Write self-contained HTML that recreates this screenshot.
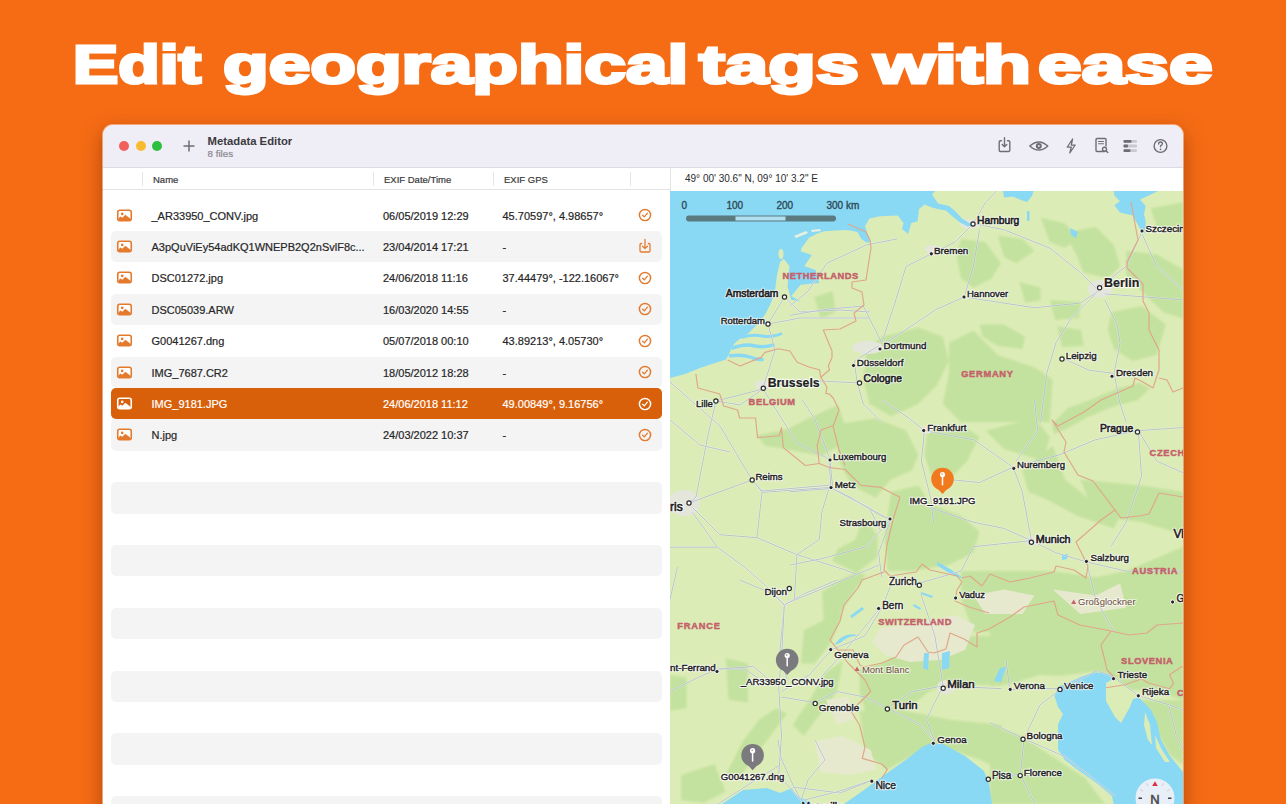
<!DOCTYPE html>
<html><head><meta charset="utf-8">
<style>
*{margin:0;padding:0;box-sizing:border-box}
html,body{width:1286px;height:804px;overflow:hidden;background:#F66C15;font-family:"Liberation Sans",sans-serif}
#headline{position:absolute;left:0;top:0;width:1286px;height:110px}
#headline span{position:absolute;top:34px;font-weight:bold;font-size:53px;color:#fff;white-space:nowrap;transform-origin:0 0;-webkit-text-stroke:3px #fff}
#win{position:absolute;left:103px;top:125px;width:1080px;height:700px;border-radius:10px;background:#fff;overflow:hidden;box-shadow:0 0 0 1px rgba(255,225,200,0.55),0 7px 20px rgba(110,35,0,0.55)}
#title{position:absolute;left:0;top:0;width:1080px;height:43px;background:#EFEDF5;border-bottom:1px solid #DDDBE2}
.tl{position:absolute;top:16px;width:10.2px;height:10.2px;border-radius:50%}
#hdr{position:absolute;left:0;top:43px;width:567px;height:22px;background:#fff;border-bottom:1px solid #E3E3E3}
.hd{position:absolute;top:0.5px;height:22px;line-height:22px;font-size:9.5px;color:#3a3a3a;-webkit-text-stroke:0.2px #3a3a3a}
.vd{position:absolute;top:4px;width:1px;height:14px;background:#E6E6E6}
.row{position:absolute;left:8px;width:551px;height:31.4px;border-radius:5px}
.row.s{background:#F4F4F5}
.row.sel{background:#D9600B}
.cell{position:absolute;top:1px;height:31px;line-height:31px;font-size:11px;color:#262626;white-space:nowrap;-webkit-text-stroke:0.2px #262626}
.sel .cell{-webkit-text-stroke:0.2px #fff}
.sel .cell{color:#fff}
#map{position:absolute;left:567px;top:66px;width:513px;height:640px;background:#DCEBB8;overflow:hidden}
#coord{position:absolute;left:567px;top:43px;width:513px;height:23px;background:#fff;border-left:1px solid #E3E3E3;font-size:10px;line-height:22px;color:#2a2a2a;padding-left:14px;white-space:nowrap}
#ttl{position:absolute;left:104.5px;top:9.5px;font-size:11.3px;font-weight:bold;color:#3b3a40;white-space:nowrap}
#sub{position:absolute;left:104.5px;top:22.5px;font-size:9.8px;color:#8a898f;white-space:nowrap;-webkit-text-stroke:0.2px #8a898f}
</style></head><body>
<div id="headline"><span style="left:73px;transform:scaleX(1.2795)">Edit</span><span style="left:223px;transform:scaleX(1.4104)">geographical</span><span style="left:699px;transform:scaleX(1.4672)">tags</span><span style="left:874px;transform:scaleX(1.4816)">with</span><span style="left:1038px;transform:scaleX(1.4808)">ease</span></div>
<div id="win">
  <div id="title">
    <div class="tl" style="left:16px;background:#F1605A"></div>
    <div class="tl" style="left:32.5px;background:#F7BB31"></div>
    <div class="tl" style="left:49px;background:#2DC040"></div>
    <svg width="14" height="14" viewBox="0 0 14 14" style="position:absolute;left:79px;top:14px"><path d="M7 1.5 V12.5 M1.5 7 H12.5" stroke="#6E6D74" stroke-width="1.5"/></svg>
    <div id="ttl">Metadata Editor</div>
    <div id="sub">8 files</div>
    <svg width="200" height="30" viewBox="0 0 200 30" style="position:absolute;left:880px;top:6px">
<g fill="none" stroke="#6E6D74" stroke-width="1.4" stroke-linecap="round" stroke-linejoin="round">
<path d="M18.5 9.8 H17.5 Q16.2 9.8 16.2 11.1 V19.2 Q16.2 20.5 17.5 20.5 H25.5 Q26.8 20.5 26.8 19.2 V11.1 Q26.8 9.8 25.5 9.8 H24.5"/>
<path d="M21.5 6.8 V15.8 M19.2 13.5 L21.5 15.8 L23.8 13.5"/>
<path d="M46.8 15 Q55.8 6.8 64.8 15 Q55.8 23.2 46.8 15 Z"/>
<path d="M89.6 8 L84.3 16 H88.3 L86.8 22 L92.2 14 H88.3 Z" stroke-width="1.25"/>
<path d="M121.5 20.5 H114 Q113 20.5 113 19.5 V8.5 Q113 7.5 114 7.5 H122 Q123 7.5 123 8.5 V15"/>
<path d="M115.5 10.5 H120.5 M115.5 12.8 H120.5" stroke-width="1.1"/>
<circle cx="121.5" cy="18.3" r="2"/><path d="M123 19.8 L124.8 21.6"/>
<circle cx="177.5" cy="15" r="6.4"/>
<path d="M175.6 13.1 Q175.6 11 177.5 11 Q179.4 11 179.4 12.8 Q179.4 14 177.5 14.8 V15.8" stroke-width="1.3"/>
</g>
<circle cx="55.8" cy="15" r="3" fill="#6E6D74"/>
<circle cx="55.8" cy="15" r="0.9" fill="#EEECF3"/>
<circle cx="177.5" cy="18.3" r="0.85" fill="#6E6D74"/>
<g fill="#C9C8CE">
<rect x="140.5" y="9" width="13.5" height="2.8" rx="1.2"/>
<rect x="140.5" y="13.6" width="13.5" height="2.8" rx="1.2"/>
<rect x="140.5" y="18.2" width="13.5" height="2.8" rx="1.2"/>
</g>
<g fill="#6E6D74">
<rect x="140.5" y="9" width="8" height="2.8" rx="1"/>
<rect x="140.5" y="13.6" width="4.5" height="2.8" rx="1"/>
<rect x="140.5" y="18.2" width="7" height="2.8" rx="1"/>
</g>
</svg>
  </div>
  <div id="hdr">
    <div class="vd" style="left:39px"></div>
    <div class="hd" style="left:50px">Name</div>
    <div class="vd" style="left:270px"></div>
    <div class="hd" style="left:281px">EXIF Date/Time</div>
    <div class="vd" style="left:390px"></div>
    <div class="hd" style="left:401px">EXIF GPS</div>
    <div class="vd" style="left:527px"></div>
  </div>
  <div id="rows">
<div class="row" style="top:74.6px"><svg width="17" height="14" viewBox="0 0 17 14" style="position:absolute;left:5px;top:9px">
<rect x="1.75" y="1.25" width="13.5" height="10.5" rx="2" fill="#fff" stroke="#E47A2E" stroke-width="1.6"/>
<circle cx="6.2" cy="4.9" r="1.3" fill="#E47A2E"/>
<path d="M2.5 10.9 L2.5 9.2 L4.5 7.6 L6.3 8.8 L9.3 5.8 L14.5 9.8 L14.5 10.9 Z" fill="#E47A2E"/>
</svg><div class="cell" style="left:40.5px">_AR33950_CONV.jpg</div><div class="cell" style="left:272px">06/05/2019 12:29</div><div class="cell" style="left:391.5px">45.70597°, 4.98657°</div><svg width="14" height="14" viewBox="0 0 14 14" style="position:absolute;left:526.5px;top:8.5px">
<circle cx="7" cy="7" r="5.6" fill="none" stroke="#E47A2E" stroke-width="1.45"/>
<path d="M4.6 7.2 L6.3 8.9 L9.4 5.2" fill="none" stroke="#E47A2E" stroke-width="1.3" stroke-linecap="round" stroke-linejoin="round"/>
</svg></div>
<div class="row s" style="top:106.0px"><svg width="17" height="14" viewBox="0 0 17 14" style="position:absolute;left:5px;top:9px">
<rect x="1.75" y="1.25" width="13.5" height="10.5" rx="2" fill="#fff" stroke="#E47A2E" stroke-width="1.6"/>
<circle cx="6.2" cy="4.9" r="1.3" fill="#E47A2E"/>
<path d="M2.5 10.9 L2.5 9.2 L4.5 7.6 L6.3 8.8 L9.3 5.8 L14.5 9.8 L14.5 10.9 Z" fill="#E47A2E"/>
</svg><div class="cell" style="left:40.5px">A3pQuViEy54adKQ1WNEPB2Q2nSvlF8c...</div><div class="cell" style="left:272px">23/04/2014 17:21</div><div class="cell" style="left:391.5px">-</div><svg width="14" height="16" viewBox="0 0 14 16" style="position:absolute;left:526.5px;top:7px">
<path d="M4.2 5.5 H3.2 Q2 5.5 2 6.8 V12.8 Q2 14 3.2 14 H10.8 Q12 14 12 12.8 V6.8 Q12 5.5 10.8 5.5 H9.8" fill="none" stroke="#E47A2E" stroke-width="1.3"/>
<path d="M7 1.5 V10.5 M4.6 8.2 L7 10.6 L9.4 8.2" fill="none" stroke="#E47A2E" stroke-width="1.3" stroke-linecap="round" stroke-linejoin="round"/>
</svg></div>
<div class="row" style="top:137.4px"><svg width="17" height="14" viewBox="0 0 17 14" style="position:absolute;left:5px;top:9px">
<rect x="1.75" y="1.25" width="13.5" height="10.5" rx="2" fill="#fff" stroke="#E47A2E" stroke-width="1.6"/>
<circle cx="6.2" cy="4.9" r="1.3" fill="#E47A2E"/>
<path d="M2.5 10.9 L2.5 9.2 L4.5 7.6 L6.3 8.8 L9.3 5.8 L14.5 9.8 L14.5 10.9 Z" fill="#E47A2E"/>
</svg><div class="cell" style="left:40.5px">DSC01272.jpg</div><div class="cell" style="left:272px">24/06/2018 11:16</div><div class="cell" style="left:391.5px">37.44479°, -122.16067°</div><svg width="14" height="14" viewBox="0 0 14 14" style="position:absolute;left:526.5px;top:8.5px">
<circle cx="7" cy="7" r="5.6" fill="none" stroke="#E47A2E" stroke-width="1.45"/>
<path d="M4.6 7.2 L6.3 8.9 L9.4 5.2" fill="none" stroke="#E47A2E" stroke-width="1.3" stroke-linecap="round" stroke-linejoin="round"/>
</svg></div>
<div class="row s" style="top:168.8px"><svg width="17" height="14" viewBox="0 0 17 14" style="position:absolute;left:5px;top:9px">
<rect x="1.75" y="1.25" width="13.5" height="10.5" rx="2" fill="#fff" stroke="#E47A2E" stroke-width="1.6"/>
<circle cx="6.2" cy="4.9" r="1.3" fill="#E47A2E"/>
<path d="M2.5 10.9 L2.5 9.2 L4.5 7.6 L6.3 8.8 L9.3 5.8 L14.5 9.8 L14.5 10.9 Z" fill="#E47A2E"/>
</svg><div class="cell" style="left:40.5px">DSC05039.ARW</div><div class="cell" style="left:272px">16/03/2020 14:55</div><div class="cell" style="left:391.5px">-</div><svg width="14" height="14" viewBox="0 0 14 14" style="position:absolute;left:526.5px;top:8.5px">
<circle cx="7" cy="7" r="5.6" fill="none" stroke="#E47A2E" stroke-width="1.45"/>
<path d="M4.6 7.2 L6.3 8.9 L9.4 5.2" fill="none" stroke="#E47A2E" stroke-width="1.3" stroke-linecap="round" stroke-linejoin="round"/>
</svg></div>
<div class="row" style="top:200.2px"><svg width="17" height="14" viewBox="0 0 17 14" style="position:absolute;left:5px;top:9px">
<rect x="1.75" y="1.25" width="13.5" height="10.5" rx="2" fill="#fff" stroke="#E47A2E" stroke-width="1.6"/>
<circle cx="6.2" cy="4.9" r="1.3" fill="#E47A2E"/>
<path d="M2.5 10.9 L2.5 9.2 L4.5 7.6 L6.3 8.8 L9.3 5.8 L14.5 9.8 L14.5 10.9 Z" fill="#E47A2E"/>
</svg><div class="cell" style="left:40.5px">G0041267.dng</div><div class="cell" style="left:272px">05/07/2018 00:10</div><div class="cell" style="left:391.5px">43.89213°, 4.05730°</div><svg width="14" height="14" viewBox="0 0 14 14" style="position:absolute;left:526.5px;top:8.5px">
<circle cx="7" cy="7" r="5.6" fill="none" stroke="#E47A2E" stroke-width="1.45"/>
<path d="M4.6 7.2 L6.3 8.9 L9.4 5.2" fill="none" stroke="#E47A2E" stroke-width="1.3" stroke-linecap="round" stroke-linejoin="round"/>
</svg></div>
<div class="row s" style="top:231.6px"><svg width="17" height="14" viewBox="0 0 17 14" style="position:absolute;left:5px;top:9px">
<rect x="1.75" y="1.25" width="13.5" height="10.5" rx="2" fill="#fff" stroke="#E47A2E" stroke-width="1.6"/>
<circle cx="6.2" cy="4.9" r="1.3" fill="#E47A2E"/>
<path d="M2.5 10.9 L2.5 9.2 L4.5 7.6 L6.3 8.8 L9.3 5.8 L14.5 9.8 L14.5 10.9 Z" fill="#E47A2E"/>
</svg><div class="cell" style="left:40.5px">IMG_7687.CR2</div><div class="cell" style="left:272px">18/05/2012 18:28</div><div class="cell" style="left:391.5px">-</div><svg width="14" height="14" viewBox="0 0 14 14" style="position:absolute;left:526.5px;top:8.5px">
<circle cx="7" cy="7" r="5.6" fill="none" stroke="#E47A2E" stroke-width="1.45"/>
<path d="M4.6 7.2 L6.3 8.9 L9.4 5.2" fill="none" stroke="#E47A2E" stroke-width="1.3" stroke-linecap="round" stroke-linejoin="round"/>
</svg></div>
<div class="row sel" style="top:263.0px"><svg width="17" height="14" viewBox="0 0 17 14" style="position:absolute;left:5px;top:9px">
<rect x="1.75" y="1.25" width="13.5" height="10.5" rx="2" fill="#D9600B" stroke="#fff" stroke-width="1.6"/>
<circle cx="6.2" cy="4.9" r="1.3" fill="#fff"/>
<path d="M2.5 10.9 L2.5 9.2 L4.5 7.6 L6.3 8.8 L9.3 5.8 L14.5 9.8 L14.5 10.9 Z" fill="#fff"/>
</svg><div class="cell" style="left:40.5px">IMG_9181.JPG</div><div class="cell" style="left:272px">24/06/2018 11:12</div><div class="cell" style="left:391.5px">49.00849°, 9.16756°</div><svg width="14" height="14" viewBox="0 0 14 14" style="position:absolute;left:526.5px;top:8.5px">
<circle cx="7" cy="7" r="5.6" fill="none" stroke="#fff" stroke-width="1.45"/>
<path d="M4.6 7.2 L6.3 8.9 L9.4 5.2" fill="none" stroke="#fff" stroke-width="1.3" stroke-linecap="round" stroke-linejoin="round"/>
</svg></div>
<div class="row s" style="top:294.4px"><svg width="17" height="14" viewBox="0 0 17 14" style="position:absolute;left:5px;top:9px">
<rect x="1.75" y="1.25" width="13.5" height="10.5" rx="2" fill="#fff" stroke="#E47A2E" stroke-width="1.6"/>
<circle cx="6.2" cy="4.9" r="1.3" fill="#E47A2E"/>
<path d="M2.5 10.9 L2.5 9.2 L4.5 7.6 L6.3 8.8 L9.3 5.8 L14.5 9.8 L14.5 10.9 Z" fill="#E47A2E"/>
</svg><div class="cell" style="left:40.5px">N.jpg</div><div class="cell" style="left:272px">24/03/2022 10:37</div><div class="cell" style="left:391.5px">-</div><svg width="14" height="14" viewBox="0 0 14 14" style="position:absolute;left:526.5px;top:8.5px">
<circle cx="7" cy="7" r="5.6" fill="none" stroke="#E47A2E" stroke-width="1.45"/>
<path d="M4.6 7.2 L6.3 8.9 L9.4 5.2" fill="none" stroke="#E47A2E" stroke-width="1.3" stroke-linecap="round" stroke-linejoin="round"/>
</svg></div>
<div class="row s" style="top:357.2px"></div>
<div class="row s" style="top:420.0px"></div>
<div class="row s" style="top:482.8px"></div>
<div class="row s" style="top:545.6px"></div>
<div class="row s" style="top:608.4px"></div>
<div class="row s" style="top:671.2px"></div>
  </div>
  <div id="coord">49° 00' 30.6" N, 09° 10' 3.2" E</div>
  <div id="map"><svg width="513" height="640" viewBox="670 191 513 640" style="position:absolute;left:0;top:0;font-family:Liberation Sans,sans-serif"><rect x="670" y="190" width="520" height="620" fill="#DCECB6"/><defs><filter id="soft" x="-5%" y="-5%" width="110%" height="110%"><feGaussianBlur stdDeviation="1.2"/></filter></defs><g filter="url(#soft)"><path d="M961.1,238.9 L985.6,242.0 L1000.9,263.3 L991.7,278.6 L973.4,287.8 L961.1,278.6 L956.6,257.2 Z" fill="#C4E29F"/><path d="M997.8,235.8 L1022.3,238.9 L1034.5,251.1 L1016.2,263.3 L1003.9,257.2 Z" fill="#C4E29F"/><path d="M1040.6,217.5 L1065.1,223.6 L1077.3,238.9 L1065.1,248.1 L1049.8,242.0 Z" fill="#C4E29F"/><path d="M1065.1,232.8 L1095.6,226.7 L1114.0,245.0 L1120.1,266.4 L1107.8,278.6 L1083.4,272.5 L1077.3,257.2 Z" fill="#C4E29F"/><path d="M1126.2,251.1 L1156.7,254.2 L1183.0,269.5 L1183.0,318.4 L1162.9,312.2 L1141.5,290.9 L1126.2,275.6 Z" fill="#C4E29F"/><path d="M1110.9,312.2 L1141.5,306.1 L1165.9,324.5 L1156.7,355.0 L1132.3,361.1 L1114.0,348.9 L1107.8,330.6 Z" fill="#C4E29F"/><path d="M979.5,324.5 L1003.9,324.5 L1025.3,336.7 L1022.3,348.9 L997.8,345.9 L982.5,336.7 Z" fill="#C4E29F"/><path d="M1019.2,281.7 L1040.6,287.8 L1040.6,300.0 L1025.3,303.1 Z" fill="#C4E29F"/><path d="M866.4,348.9 L881.7,336.7 L918.4,327.5 L942.8,336.7 L948.9,361.1 L936.7,385.6 L918.4,403.9 L890.9,416.2 L869.5,403.9 L863.3,379.5 Z" fill="#C4E29F"/><path d="M948.9,342.8 L973.4,330.6 L997.8,355.0 L1034.5,367.3 L1052.8,379.5 L1049.8,422.3 L961.1,422.3 L942.8,403.9 L948.9,373.4 Z" fill="#C4E29F"/><path d="M814.4,297.0 L832.8,290.9 L835.8,312.2 L820.6,318.4 Z" fill="#C4E29F"/><path d="M1052,424 L1068,408 L1095,398 L1118,388 L1140,383 L1150,388 L1138,400 L1112,407 L1088,417 L1064,430 L1054,434 Z" fill="#C4E29F"/><path d="M1057,326 L1081,330 L1084,346 L1062,347 Z" fill="#C4E29F"/><path d="M1050,300 L1081,302 L1079,318 L1055,320 Z" fill="#C4E29F"/><path d="M1150.6,208.3 L1183.0,202.2 L1183.0,232.8 L1156.7,226.7 Z" fill="#C4E29F"/><path d="M835.8,424.4 L875.6,418.3 L906.1,430.6 L918.4,455.0 L912.2,470.3 L890.9,479.5 L875.6,497.8 L851.1,485.6 L838.9,461.1 Z" fill="#C4E29F"/><path d="M890.9,491.7 L918.4,485.6 L930.6,503.9 L961.1,516.1 L979.5,531.4 L973.4,552.8 L948.9,565.0 L912.2,571.1 L887.8,571.1 L884.7,537.5 Z" fill="#C4E29F"/><path d="M927.5,430.6 L961.1,424.4 L979.5,436.7 L967.3,461.1 L948.9,479.5 L930.6,473.3 L924.5,455.0 Z" fill="#C4E29F"/><path d="M985.6,430.6 L1034.5,418.3 L1049.8,436.7 L1043.7,461.1 L1003.9,448.9 Z" fill="#C4E29F"/><path d="M1022.3,470.3 L1052.8,445.8 L1065.1,479.5 L1095.6,503.9 L1120.1,516.1 L1114.0,528.4 L1077.3,516.1 L1049.8,500.9 L1028.4,491.7 Z" fill="#C4E29F"/><path d="M1080.3,479.5 L1141.5,485.6 L1183.0,491.7 L1183.0,534.5 L1141.5,522.2 L1095.6,516.1 Z" fill="#C4E29F"/><path d="M961.1,571.1 L1003.9,571.1 L1052.8,571.1 L1095.6,577.3 L1126.2,571.1 L1183.0,546.7 L1183.0,632.3 L973.4,632.3 L961.1,598.7 Z" fill="#C4E29F"/><path d="M822,592 L840,580 L856,572 L866,575 L850,598 L836,620 L824,625 Z" fill="#C4E29F"/><path d="M863.5,517 L877.5,535 L877.5,557 L856.6,573 L832.3,561 L837.5,549 L855,540 Z" fill="#C4E29F"/><path d="M757,435 L775,432 L790,428 L805,420 L822,412 L838,405 L845,425 L840,445 L822,456 L800,452 L780,448 L765,446 Z" fill="#C4E29F"/><path d="M985.6,400.0 L1022.3,400.0 L1016.2,418.3 L991.7,418.3 Z" fill="#C4E29F"/><path d="M803.8,630.2 L826.1,619.0 L842.8,613.4 L831.6,641.3 L814.9,663.6 L801.0,663.6 Z" fill="#C4E29F"/><path d="M792.6,724.9 L809.4,699.8 L826.1,672.0 L842.8,660.8 L837.2,691.5 L820.5,713.8 L803.8,736.1 Z" fill="#C4E29F"/><path d="M725.7,775.1 L742.5,741.6 L759.2,719.4 L775.9,708.2 L787.1,713.8 L770.3,736.1 L753.6,758.4 L736.9,780.7 Z" fill="#C4E29F"/><path d="M670.0,674.8 L686.7,677.5 L686.7,708.2 L670.0,711.0 Z" fill="#C4E29F"/><path d="M725.7,658.0 L748.0,663.6 L748.0,702.6 L728.5,699.8 Z" fill="#C4E29F"/><path d="M859.5,669.2 L881.8,663.6 L909.7,646.9 L934.8,658.0 L948.7,635.7 L1001.7,635.7 L1001.7,685.9 L948.7,683.1 L929.2,691.5 L915.3,702.6 L893.0,708.2 L865.1,711.0 L859.5,691.5 Z" fill="#C4E29F"/><path d="M859.5,711.0 L893.0,708.2 L920.8,713.8 L948.7,719.4 L1001.7,724.9 L1001.7,769.5 L976.6,758.4 L934.8,744.4 L906.9,758.4 L887.4,769.5 L865.1,752.8 Z" fill="#C4E29F"/><path d="M681.1,775.1 L714.6,763.9 L725.7,791.8 L703.4,803.0 L681.1,800.2 Z" fill="#C4E29F"/><path d="M990,610 L1183,605 L1183,700 L1150,690 L1130,690 L1110,675 L1090,672 L1060,676 L1040,675 L1010,684 L990,686 Z" fill="#C4E29F"/><path d="M1140,700 L1183,700 L1183,765 L1170,755 L1160,738 L1152,715 Z" fill="#C4E29F"/><path d="M990,725 L1020,735 L1050,755 L1085,778 L1105,804 L990,804 Z" fill="#C4E29F"/></g><path d="M880,628 L920,622 L955,615 L975,625 L965,650 L940,660 L910,662 L885,655 L872,642 Z" fill="#E6E9CE"/><path d="M814.9,741.6 L842.8,736.1 L870.7,750.0 L876.2,769.5 L848.4,775.1 L820.5,772.3 Z" fill="#E6E9CE"/><path d="M826.1,699.8 L848.4,697.1 L853.9,719.4 L837.2,724.9 Z" fill="#E6E9CE"/><path d="M973.4,595.6 L1003.9,589.5 L1034.5,595.6 L1022.3,613.9 L985.6,613.9 Z" fill="#E6E9CE"/><path d="M1052.8,589.5 L1095.6,595.6 L1120.1,583.4 L1126.2,607.8 L1080.3,613.9 Z" fill="#E6E9CE"/><ellipse cx="684.0" cy="503.0" rx="16.0" ry="13.0" fill="#E4E6DC"/><ellipse cx="868.0" cy="347.5" rx="16.0" ry="6.5" fill="#E4E6DC"/><ellipse cx="1100.0" cy="289.0" rx="12.0" ry="9.0" fill="#E4E6DC"/><ellipse cx="970.0" cy="224.0" rx="10.0" ry="5.0" fill="#E4E6DC"/><ellipse cx="932.0" cy="249.0" rx="7.0" ry="4.0" fill="#E4E6DC"/><ellipse cx="946.0" cy="687.0" rx="9.0" ry="7.0" fill="#E4E6DC"/><ellipse cx="763.0" cy="385.0" rx="8.0" ry="5.0" fill="#E4E6DC"/><ellipse cx="926.0" cy="430.0" rx="6.0" ry="4.0" fill="#E4E6DC"/><ellipse cx="1032.0" cy="541.0" rx="7.0" ry="5.0" fill="#E4E6DC"/><path d="M670,190 L935.8,190 L932,194.5 L938,203.5 L949,206 L955,211 L962,218.5 L970,223.5 L972,225.4 L968,226.6 L960,222.5 L952,216 L946,210.5 L940,209.5 L932,207.5 L924.6,204.6 L919,209 L917.5,221.5 L911.2,223 L908.2,234 L902,229 L903.5,223 L897.8,215.6 L880,216.2 L869.4,218.6 L865,226 L868.7,237 L870.5,242 L866.4,242.6 L861.2,238.8 L857.5,232 L850,230.5 L844.2,230 L824.3,231.2 L818,233.2 L809.3,237.5 L801.9,247.4 L800.6,251.2 L811.8,255 L804.3,266 L815.5,269.9 L819.3,283 L800.6,284.8 L791.3,296 L800.6,301.6 L791.3,299.7 L787.5,286.6 L789.4,266 L783.8,258.7 L780,262 L777,275 L774.5,294 L770,305 L765,314.6 L757.7,324 L748.4,333.3 L742,337 L735,343 L731.6,348 L729,354 L726,359.4 L715,363 L700,368 L685,374 L670,378 Z" fill="#89D8F4"/><ellipse cx="781" cy="254" rx="2.5" ry="5" fill="#DCECB6"/><path d="M794,236 L806,231 L808,233 L796,238 Z" fill="#E9F1DC"/><path d="M811,230 L820,229 L821,231 L812,232 Z" fill="#E9F1DC"/><path d="M741,337.5 Q752,334 762,336 Q772,338 782,333.5" fill="none" stroke="#89D8F4" stroke-width="3"/><path d="M731.5,348.5 Q745,343 755,346 Q765,348 774.5,344.5" fill="none" stroke="#89D8F4" stroke-width="3.4"/><path d="M729,356 Q742,354 750,357 Q757,360 763.5,359.5" fill="none" stroke="#89D8F4" stroke-width="3.4"/><path d="M1003,190 L1034,190 L1032,196 L1027,202 L1021,200 L1013,196.5 L1004,197.5 Z" fill="#89D8F4"/><path d="M1113.6,190 L1160,190 L1150.5,194.8 L1140,199.6 L1145.7,206 L1144,214 L1145.7,222 L1145.7,233 L1141.6,231.6 L1132.8,215.6 L1120,212.4 L1114.4,205.2 L1120,201.2 L1114.4,195.6 Z" fill="#89D8F4"/><path d="M722,804 L743,790 L767,788 L780,793 L792,788 L796,795 L806,800 L813,804 Z" fill="#89D8F4"/><path d="M844,804 L864,790 L883,776 L907,759 L922,747 L931,743 L943,744 L965,756 L984,771 L989,783 L992,804 Z" fill="#89D8F4"/><path d="M1058,687 L1071,681.5 L1083,676 L1094,672.5 L1108,673.4 L1115,678 L1106,683 L1106,701 L1115,717 L1121,723 L1130,707 L1133,699 L1139,697.6 L1151,710 L1157,722 L1161,740 L1170,756 L1183,772 L1183,810 L1115,810 L1112,796 L1097,783.5 L1079.5,771 L1065,760 L1058,749.5 L1058,724.5 L1063,714 L1058,707 L1054.5,696 Z" fill="#89D8F4"/><path d="M1145,712 L1150,725 L1152,745 L1148,740 L1144,725 Z" fill="#DCECB6"/><path d="M1155,735 L1162,750 L1170,762 L1165,762 L1156,748 Z" fill="#DCECB6"/><path d="M834,645 Q845,630 860,636 Q850,634 840,643 Z" fill="#89D8F4"/><path d="M937,562 Q950,568 963,578 Q955,578 937,565 Z" fill="#89D8F4"/><path d="M850,616 L862,607 L864,609 L852,618 Z" fill="#89D8F4"/><path d="M921,592 L933,596 L932,598 L921,594 Z" fill="#89D8F4"/><path d="M914,604 L921,608 L920,610 L913,606 Z" fill="#89D8F4"/><path d="M924,653 L929,653 L928,670 L923,668 Z" fill="#89D8F4"/><path d="M942,653 L950,651 L949,668 L942,670 Z" fill="#89D8F4"/><path d="M994,681 L1000,668 L1006,667 L1001,682 Z" fill="#89D8F4"/><path d="M1070,228 L1078,232 L1076,238 L1071,235 Z" fill="#89D8F4"/><path d="M1027,211 L1029.5,211 L1029.5,221 L1027,221 Z" fill="#89D8F4"/><path d="M1062,555 L1068,554 L1067,559 L1062,560 Z" fill="#89D8F4"/><path d="M692.4,507.4 L719.8,534.7 L757,537.7 L796.9,554.6" fill="none" stroke="#FFFFFF" stroke-width="1.8" stroke-opacity="0.45" stroke-linejoin="round"/><path d="M692.4,507.4 L719.8,534.7 L757,537.7 L796.9,554.6" fill="none" stroke="#AEB9C6" stroke-width="0.85" stroke-linejoin="round"/><path d="M692.4,512.3 L717.3,547.2 L744.6,567 L764.5,584.5 L784.5,604.4" fill="none" stroke="#FFFFFF" stroke-width="1.8" stroke-opacity="0.45" stroke-linejoin="round"/><path d="M692.4,512.3 L717.3,547.2 L744.6,567 L764.5,584.5 L784.5,604.4" fill="none" stroke="#AEB9C6" stroke-width="0.85" stroke-linejoin="round"/><path d="M752.1,480 L762,492.4 L757,537.2" fill="none" stroke="#FFFFFF" stroke-width="1.8" stroke-opacity="0.45" stroke-linejoin="round"/><path d="M752.1,480 L762,492.4 L757,537.2" fill="none" stroke="#AEB9C6" stroke-width="0.85" stroke-linejoin="round"/><path d="M762,492.4 L829.2,487.5" fill="none" stroke="#FFFFFF" stroke-width="1.8" stroke-opacity="0.45" stroke-linejoin="round"/><path d="M762,492.4 L829.2,487.5" fill="none" stroke="#AEB9C6" stroke-width="0.85" stroke-linejoin="round"/><path d="M829.2,487.5 L821.8,512.3 L819.3,539.7 L796.9,554.6" fill="none" stroke="#FFFFFF" stroke-width="1.8" stroke-opacity="0.45" stroke-linejoin="round"/><path d="M829.2,487.5 L821.8,512.3 L819.3,539.7 L796.9,554.6" fill="none" stroke="#AEB9C6" stroke-width="0.85" stroke-linejoin="round"/><path d="M796.9,554.6 L794.4,599.4 L784.5,604.4" fill="none" stroke="#FFFFFF" stroke-width="1.8" stroke-opacity="0.45" stroke-linejoin="round"/><path d="M796.9,554.6 L794.4,599.4 L784.5,604.4" fill="none" stroke="#AEB9C6" stroke-width="0.85" stroke-linejoin="round"/><path d="M796.9,554.6 L844.2,569.6 L856.6,574.5 L880,564.6" fill="none" stroke="#FFFFFF" stroke-width="1.8" stroke-opacity="0.45" stroke-linejoin="round"/><path d="M796.9,554.6 L844.2,569.6 L856.6,574.5 L880,564.6" fill="none" stroke="#AEB9C6" stroke-width="0.85" stroke-linejoin="round"/><path d="M784.5,604.4 L856.6,574.5" fill="none" stroke="#FFFFFF" stroke-width="1.8" stroke-opacity="0.45" stroke-linejoin="round"/><path d="M784.5,604.4 L856.6,574.5" fill="none" stroke="#AEB9C6" stroke-width="0.85" stroke-linejoin="round"/><path d="M784.5,604.4 L779.5,654.2 L787,679" fill="none" stroke="#FFFFFF" stroke-width="1.8" stroke-opacity="0.45" stroke-linejoin="round"/><path d="M784.5,604.4 L779.5,654.2 L787,679" fill="none" stroke="#AEB9C6" stroke-width="0.85" stroke-linejoin="round"/><path d="M670,547.2 L717.3,547.2" fill="none" stroke="#FFFFFF" stroke-width="1.8" stroke-opacity="0.45" stroke-linejoin="round"/><path d="M670,547.2 L717.3,547.2" fill="none" stroke="#AEB9C6" stroke-width="0.85" stroke-linejoin="round"/><path d="M829.2,487.5 L869,507.4 L880,529.8" fill="none" stroke="#FFFFFF" stroke-width="1.8" stroke-opacity="0.45" stroke-linejoin="round"/><path d="M829.2,487.5 L869,507.4 L880,529.8" fill="none" stroke="#AEB9C6" stroke-width="0.85" stroke-linejoin="round"/><path d="M670,599.4 L677.5,567" fill="none" stroke="#FFFFFF" stroke-width="1.8" stroke-opacity="0.45" stroke-linejoin="round"/><path d="M670,599.4 L677.5,567" fill="none" stroke="#AEB9C6" stroke-width="0.85" stroke-linejoin="round"/><path d="M819.3,679 L844.2,651.7 L879,609.4" fill="none" stroke="#FFFFFF" stroke-width="1.8" stroke-opacity="0.45" stroke-linejoin="round"/><path d="M819.3,679 L844.2,651.7 L879,609.4" fill="none" stroke="#AEB9C6" stroke-width="0.85" stroke-linejoin="round"/><path d="M670,669 L717.3,669 L744.6,669 L759.6,679" fill="none" stroke="#FFFFFF" stroke-width="1.8" stroke-opacity="0.45" stroke-linejoin="round"/><path d="M670,669 L717.3,669 L744.6,669 L759.6,679" fill="none" stroke="#AEB9C6" stroke-width="0.85" stroke-linejoin="round"/><path d="M778,740 L781,758 L793,785 L801,800" fill="none" stroke="#FFFFFF" stroke-width="1.8" stroke-opacity="0.45" stroke-linejoin="round"/><path d="M778,740 L781,758 L793,785 L801,800" fill="none" stroke="#AEB9C6" stroke-width="0.85" stroke-linejoin="round"/><path d="M815,740 L825,760 L808,780 L801,800" fill="none" stroke="#FFFFFF" stroke-width="1.8" stroke-opacity="0.45" stroke-linejoin="round"/><path d="M815,740 L825,760 L808,780 L801,800" fill="none" stroke="#AEB9C6" stroke-width="0.85" stroke-linejoin="round"/><path d="M718,804 L751,783 L780,765" fill="none" stroke="#FFFFFF" stroke-width="1.8" stroke-opacity="0.45" stroke-linejoin="round"/><path d="M718,804 L751,783 L780,765" fill="none" stroke="#AEB9C6" stroke-width="0.85" stroke-linejoin="round"/><path d="M793,787 L840,793 L871,781" fill="none" stroke="#FFFFFF" stroke-width="1.8" stroke-opacity="0.45" stroke-linejoin="round"/><path d="M793,787 L840,793 L871,781" fill="none" stroke="#AEB9C6" stroke-width="0.85" stroke-linejoin="round"/><path d="M784.5,297 L768,324 L775,350 L763,388" fill="none" stroke="#FFFFFF" stroke-width="1.8" stroke-opacity="0.45" stroke-linejoin="round"/><path d="M784.5,297 L768,324 L775,350 L763,388" fill="none" stroke="#AEB9C6" stroke-width="0.85" stroke-linejoin="round"/><path d="M784.5,297 L800,312 L840,310 L870,312" fill="none" stroke="#FFFFFF" stroke-width="1.8" stroke-opacity="0.45" stroke-linejoin="round"/><path d="M784.5,297 L800,312 L840,310 L870,312" fill="none" stroke="#AEB9C6" stroke-width="0.85" stroke-linejoin="round"/><path d="M768,324 L800,318 L870,318" fill="none" stroke="#FFFFFF" stroke-width="1.8" stroke-opacity="0.45" stroke-linejoin="round"/><path d="M768,324 L800,318 L870,318" fill="none" stroke="#AEB9C6" stroke-width="0.85" stroke-linejoin="round"/><path d="M716,401 L763,389" fill="none" stroke="#FFFFFF" stroke-width="1.8" stroke-opacity="0.45" stroke-linejoin="round"/><path d="M716,401 L763,389" fill="none" stroke="#AEB9C6" stroke-width="0.85" stroke-linejoin="round"/><path d="M716,401 L708,435 L696,497 L689,503" fill="none" stroke="#FFFFFF" stroke-width="1.8" stroke-opacity="0.45" stroke-linejoin="round"/><path d="M716,401 L708,435 L696,497 L689,503" fill="none" stroke="#AEB9C6" stroke-width="0.85" stroke-linejoin="round"/><path d="M763,389 L797,443 L829,459" fill="none" stroke="#FFFFFF" stroke-width="1.8" stroke-opacity="0.45" stroke-linejoin="round"/><path d="M763,389 L797,443 L829,459" fill="none" stroke="#AEB9C6" stroke-width="0.85" stroke-linejoin="round"/><path d="M689,503 L752,480 L762,491 L831,485" fill="none" stroke="#FFFFFF" stroke-width="1.8" stroke-opacity="0.45" stroke-linejoin="round"/><path d="M689,503 L752,480 L762,491 L831,485" fill="none" stroke="#AEB9C6" stroke-width="0.85" stroke-linejoin="round"/><path d="M752,480 L720,426 L670,382" fill="none" stroke="#FFFFFF" stroke-width="1.8" stroke-opacity="0.45" stroke-linejoin="round"/><path d="M752,480 L720,426 L670,382" fill="none" stroke="#AEB9C6" stroke-width="0.85" stroke-linejoin="round"/><path d="M831,488 L869,508 L889,519" fill="none" stroke="#FFFFFF" stroke-width="1.8" stroke-opacity="0.45" stroke-linejoin="round"/><path d="M831,488 L869,508 L889,519" fill="none" stroke="#AEB9C6" stroke-width="0.85" stroke-linejoin="round"/><path d="M831,488 L829,460" fill="none" stroke="#FFFFFF" stroke-width="1.8" stroke-opacity="0.45" stroke-linejoin="round"/><path d="M831,488 L829,460" fill="none" stroke="#AEB9C6" stroke-width="0.85" stroke-linejoin="round"/><path d="M670,420 L700,445 L730,452" fill="none" stroke="#FFFFFF" stroke-width="1.8" stroke-opacity="0.45" stroke-linejoin="round"/><path d="M670,420 L700,445 L730,452" fill="none" stroke="#AEB9C6" stroke-width="0.85" stroke-linejoin="round"/><path d="M763,389 L800,380 L860,383" fill="none" stroke="#FFFFFF" stroke-width="1.8" stroke-opacity="0.45" stroke-linejoin="round"/><path d="M763,389 L800,380 L860,383" fill="none" stroke="#AEB9C6" stroke-width="0.85" stroke-linejoin="round"/><path d="M716,401 L740,405 L763,389" fill="none" stroke="#FFFFFF" stroke-width="1.8" stroke-opacity="0.45" stroke-linejoin="round"/><path d="M716,401 L740,405 L763,389" fill="none" stroke="#AEB9C6" stroke-width="0.85" stroke-linejoin="round"/><path d="M973.4,223.6 L1003.9,229.7 L1049.8,248.1 L1080.3,272.5 L1095.6,287.8" fill="none" stroke="#FFFFFF" stroke-width="1.8" stroke-opacity="0.45" stroke-linejoin="round"/><path d="M973.4,223.6 L1003.9,229.7 L1049.8,248.1 L1080.3,272.5 L1095.6,287.8" fill="none" stroke="#AEB9C6" stroke-width="0.85" stroke-linejoin="round"/><path d="M973.4,223.6 L955.0,242.0 L930.6,254.2" fill="none" stroke="#FFFFFF" stroke-width="1.8" stroke-opacity="0.45" stroke-linejoin="round"/><path d="M973.4,223.6 L955.0,242.0 L930.6,254.2" fill="none" stroke="#AEB9C6" stroke-width="0.85" stroke-linejoin="round"/><path d="M930.6,254.2 L906.1,266.4 L893.9,306.1 L881.7,342.8" fill="none" stroke="#FFFFFF" stroke-width="1.8" stroke-opacity="0.45" stroke-linejoin="round"/><path d="M930.6,254.2 L906.1,266.4 L893.9,306.1 L881.7,342.8" fill="none" stroke="#AEB9C6" stroke-width="0.85" stroke-linejoin="round"/><path d="M964.2,297.0 L936.7,309.2 L918.4,321.4 L881.7,345.9" fill="none" stroke="#FFFFFF" stroke-width="1.8" stroke-opacity="0.45" stroke-linejoin="round"/><path d="M964.2,297.0 L936.7,309.2 L918.4,321.4 L881.7,345.9" fill="none" stroke="#AEB9C6" stroke-width="0.85" stroke-linejoin="round"/><path d="M964.2,297.0 L1003.9,303.1 L1034.5,307.7 L1080.3,303.1 L1098.7,290.9" fill="none" stroke="#FFFFFF" stroke-width="1.8" stroke-opacity="0.45" stroke-linejoin="round"/><path d="M964.2,297.0 L1003.9,303.1 L1034.5,307.7 L1080.3,303.1 L1098.7,290.9" fill="none" stroke="#AEB9C6" stroke-width="0.85" stroke-linejoin="round"/><path d="M964.2,297.0 L973.4,266.4 L979.5,229.7" fill="none" stroke="#FFFFFF" stroke-width="1.8" stroke-opacity="0.45" stroke-linejoin="round"/><path d="M964.2,297.0 L973.4,266.4 L979.5,229.7" fill="none" stroke="#AEB9C6" stroke-width="0.85" stroke-linejoin="round"/><path d="M1095.6,293.9 L1071.2,318.4 L1055.9,342.8 L1046.7,373.4 L1040.6,422.3" fill="none" stroke="#FFFFFF" stroke-width="1.8" stroke-opacity="0.45" stroke-linejoin="round"/><path d="M1095.6,293.9 L1071.2,318.4 L1055.9,342.8 L1046.7,373.4 L1040.6,422.3" fill="none" stroke="#AEB9C6" stroke-width="0.85" stroke-linejoin="round"/><path d="M1104.8,300.0 L1117.0,324.5 L1120.1,342.8 L1114.0,373.4" fill="none" stroke="#FFFFFF" stroke-width="1.8" stroke-opacity="0.45" stroke-linejoin="round"/><path d="M1104.8,300.0 L1117.0,324.5 L1120.1,342.8 L1114.0,373.4" fill="none" stroke="#AEB9C6" stroke-width="0.85" stroke-linejoin="round"/><path d="M1098.7,287.8 L1126.2,266.4 L1141.5,232.8" fill="none" stroke="#FFFFFF" stroke-width="1.8" stroke-opacity="0.45" stroke-linejoin="round"/><path d="M1098.7,287.8 L1126.2,266.4 L1141.5,232.8" fill="none" stroke="#AEB9C6" stroke-width="0.85" stroke-linejoin="round"/><path d="M1104.8,293.9 L1184.3,300.0" fill="none" stroke="#FFFFFF" stroke-width="1.8" stroke-opacity="0.45" stroke-linejoin="round"/><path d="M1104.8,293.9 L1184.3,300.0" fill="none" stroke="#AEB9C6" stroke-width="0.85" stroke-linejoin="round"/><path d="M1062.0,358.1 L1089.5,370.3 L1114.0,373.4" fill="none" stroke="#FFFFFF" stroke-width="1.8" stroke-opacity="0.45" stroke-linejoin="round"/><path d="M1062.0,358.1 L1089.5,370.3 L1114.0,373.4" fill="none" stroke="#AEB9C6" stroke-width="0.85" stroke-linejoin="round"/><path d="M878.6,345.9 L854.2,361.1 L857.2,382.5 L863.3,403.9 L881.7,422.3" fill="none" stroke="#FFFFFF" stroke-width="1.8" stroke-opacity="0.45" stroke-linejoin="round"/><path d="M878.6,345.9 L854.2,361.1 L857.2,382.5 L863.3,403.9 L881.7,422.3" fill="none" stroke="#AEB9C6" stroke-width="0.85" stroke-linejoin="round"/><path d="M1141.5,232.8 L1156.7,266.4 L1184.3,290.9" fill="none" stroke="#FFFFFF" stroke-width="1.8" stroke-opacity="0.45" stroke-linejoin="round"/><path d="M1141.5,232.8 L1156.7,266.4 L1184.3,290.9" fill="none" stroke="#AEB9C6" stroke-width="0.85" stroke-linejoin="round"/><path d="M1114.0,373.4 L1120.1,403.9 L1126.2,422.3" fill="none" stroke="#FFFFFF" stroke-width="1.8" stroke-opacity="0.45" stroke-linejoin="round"/><path d="M1114.0,373.4 L1120.1,403.9 L1126.2,422.3" fill="none" stroke="#AEB9C6" stroke-width="0.85" stroke-linejoin="round"/><path d="M790.0,315.3 L826.7,309.2 L863.3,306.1 L881.7,342.8" fill="none" stroke="#FFFFFF" stroke-width="1.8" stroke-opacity="0.45" stroke-linejoin="round"/><path d="M790.0,315.3 L826.7,309.2 L863.3,306.1 L881.7,342.8" fill="none" stroke="#AEB9C6" stroke-width="0.85" stroke-linejoin="round"/><path d="M790.0,306.1 L808.3,290.9 L826.7,263.3 L866.4,245.0 L897.0,238.9" fill="none" stroke="#FFFFFF" stroke-width="1.8" stroke-opacity="0.45" stroke-linejoin="round"/><path d="M790.0,306.1 L808.3,290.9 L826.7,263.3 L866.4,245.0 L897.0,238.9" fill="none" stroke="#AEB9C6" stroke-width="0.85" stroke-linejoin="round"/><path d="M973.4,223.6 L985.6,202.2 L997.8,190.0" fill="none" stroke="#FFFFFF" stroke-width="1.8" stroke-opacity="0.45" stroke-linejoin="round"/><path d="M973.4,223.6 L985.6,202.2 L997.8,190.0" fill="none" stroke="#AEB9C6" stroke-width="0.85" stroke-linejoin="round"/><path d="M924.5,430.6 L909.2,418.3 L881.7,400.0" fill="none" stroke="#FFFFFF" stroke-width="1.8" stroke-opacity="0.45" stroke-linejoin="round"/><path d="M924.5,430.6 L909.2,418.3 L881.7,400.0" fill="none" stroke="#AEB9C6" stroke-width="0.85" stroke-linejoin="round"/><path d="M924.5,430.6 L921.4,461.1 L930.6,497.8 L933.6,522.2" fill="none" stroke="#FFFFFF" stroke-width="1.8" stroke-opacity="0.45" stroke-linejoin="round"/><path d="M924.5,430.6 L921.4,461.1 L930.6,497.8 L933.6,522.2" fill="none" stroke="#AEB9C6" stroke-width="0.85" stroke-linejoin="round"/><path d="M924.5,430.6 L973.4,439.7 L1013.1,467.2" fill="none" stroke="#FFFFFF" stroke-width="1.8" stroke-opacity="0.45" stroke-linejoin="round"/><path d="M924.5,430.6 L973.4,439.7 L1013.1,467.2" fill="none" stroke="#AEB9C6" stroke-width="0.85" stroke-linejoin="round"/><path d="M1013.1,467.2 L1022.3,491.7 L1031.4,540.6" fill="none" stroke="#FFFFFF" stroke-width="1.8" stroke-opacity="0.45" stroke-linejoin="round"/><path d="M1013.1,467.2 L1022.3,491.7 L1031.4,540.6" fill="none" stroke="#AEB9C6" stroke-width="0.85" stroke-linejoin="round"/><path d="M1031.4,540.6 L1003.9,528.4 L973.4,522.2 L936.7,510.0 L918.4,500.9" fill="none" stroke="#FFFFFF" stroke-width="1.8" stroke-opacity="0.45" stroke-linejoin="round"/><path d="M1031.4,540.6 L1003.9,528.4 L973.4,522.2 L936.7,510.0 L918.4,500.9" fill="none" stroke="#AEB9C6" stroke-width="0.85" stroke-linejoin="round"/><path d="M1031.4,540.6 L1055.9,552.8 L1086.5,562.0" fill="none" stroke="#FFFFFF" stroke-width="1.8" stroke-opacity="0.45" stroke-linejoin="round"/><path d="M1031.4,540.6 L1055.9,552.8 L1086.5,562.0" fill="none" stroke="#AEB9C6" stroke-width="0.85" stroke-linejoin="round"/><path d="M1013.1,467.2 L1058.9,455.0 L1095.6,439.7 L1138.4,430.6" fill="none" stroke="#FFFFFF" stroke-width="1.8" stroke-opacity="0.45" stroke-linejoin="round"/><path d="M1013.1,467.2 L1058.9,455.0 L1095.6,439.7 L1138.4,430.6" fill="none" stroke="#AEB9C6" stroke-width="0.85" stroke-linejoin="round"/><path d="M1138.4,430.6 L1184.3,427.5" fill="none" stroke="#FFFFFF" stroke-width="1.8" stroke-opacity="0.45" stroke-linejoin="round"/><path d="M1138.4,430.6 L1184.3,427.5" fill="none" stroke="#AEB9C6" stroke-width="0.85" stroke-linejoin="round"/><path d="M1138.4,430.6 L1156.7,461.1 L1184.3,473.3" fill="none" stroke="#FFFFFF" stroke-width="1.8" stroke-opacity="0.45" stroke-linejoin="round"/><path d="M1138.4,430.6 L1156.7,461.1 L1184.3,473.3" fill="none" stroke="#AEB9C6" stroke-width="0.85" stroke-linejoin="round"/><path d="M1138.4,430.6 L1141.5,476.4 L1126.2,522.2 L1110.9,546.7" fill="none" stroke="#FFFFFF" stroke-width="1.8" stroke-opacity="0.45" stroke-linejoin="round"/><path d="M1138.4,430.6 L1141.5,476.4 L1126.2,522.2 L1110.9,546.7" fill="none" stroke="#AEB9C6" stroke-width="0.85" stroke-linejoin="round"/><path d="M829.7,458.1 L832.8,488.6 L851.1,497.8 L881.7,516.1 L890.9,519.2" fill="none" stroke="#FFFFFF" stroke-width="1.8" stroke-opacity="0.45" stroke-linejoin="round"/><path d="M829.7,458.1 L832.8,488.6 L851.1,497.8 L881.7,516.1 L890.9,519.2" fill="none" stroke="#AEB9C6" stroke-width="0.85" stroke-linejoin="round"/><path d="M890.9,519.2 L878.6,552.8 L881.7,577.3" fill="none" stroke="#FFFFFF" stroke-width="1.8" stroke-opacity="0.45" stroke-linejoin="round"/><path d="M890.9,519.2 L878.6,552.8 L881.7,577.3" fill="none" stroke="#AEB9C6" stroke-width="0.85" stroke-linejoin="round"/><path d="M790.0,491.7 L829.7,488.6" fill="none" stroke="#FFFFFF" stroke-width="1.8" stroke-opacity="0.45" stroke-linejoin="round"/><path d="M790.0,491.7 L829.7,488.6" fill="none" stroke="#AEB9C6" stroke-width="0.85" stroke-linejoin="round"/><path d="M1031.4,540.6 L973.4,546.7 L961.1,571.1 L918.4,583.4" fill="none" stroke="#FFFFFF" stroke-width="1.8" stroke-opacity="0.45" stroke-linejoin="round"/><path d="M1031.4,540.6 L973.4,546.7 L961.1,571.1 L918.4,583.4" fill="none" stroke="#AEB9C6" stroke-width="0.85" stroke-linejoin="round"/><path d="M1086.5,562.0 L1126.2,571.1 L1184.3,571.1" fill="none" stroke="#FFFFFF" stroke-width="1.8" stroke-opacity="0.45" stroke-linejoin="round"/><path d="M1086.5,562.0 L1126.2,571.1 L1184.3,571.1" fill="none" stroke="#AEB9C6" stroke-width="0.85" stroke-linejoin="round"/><path d="M1086.5,562.0 L1095.6,598.7 L1114.0,632.3" fill="none" stroke="#FFFFFF" stroke-width="1.8" stroke-opacity="0.45" stroke-linejoin="round"/><path d="M1086.5,562.0 L1095.6,598.7 L1114.0,632.3" fill="none" stroke="#AEB9C6" stroke-width="0.85" stroke-linejoin="round"/><path d="M1013.1,467.2 L979.5,482.5 L948.9,479.5" fill="none" stroke="#FFFFFF" stroke-width="1.8" stroke-opacity="0.45" stroke-linejoin="round"/><path d="M1013.1,467.2 L979.5,482.5 L948.9,479.5" fill="none" stroke="#AEB9C6" stroke-width="0.85" stroke-linejoin="round"/><path d="M829.7,458.1 L814.4,418.3 L802.2,400.0" fill="none" stroke="#FFFFFF" stroke-width="1.8" stroke-opacity="0.45" stroke-linejoin="round"/><path d="M829.7,458.1 L814.4,418.3 L802.2,400.0" fill="none" stroke="#AEB9C6" stroke-width="0.85" stroke-linejoin="round"/><path d="M790.0,565.0 L820.6,558.9 L866.4,546.7 L890.9,519.2" fill="none" stroke="#FFFFFF" stroke-width="1.8" stroke-opacity="0.45" stroke-linejoin="round"/><path d="M790.0,565.0 L820.6,558.9 L866.4,546.7 L890.9,519.2" fill="none" stroke="#AEB9C6" stroke-width="0.85" stroke-linejoin="round"/><path d="M1034.5,400.0 L1037.6,430.6 L1016.2,461.1" fill="none" stroke="#FFFFFF" stroke-width="1.8" stroke-opacity="0.45" stroke-linejoin="round"/><path d="M1034.5,400.0 L1037.6,430.6 L1016.2,461.1" fill="none" stroke="#AEB9C6" stroke-width="0.85" stroke-linejoin="round"/><path d="M784.3,605.1 L781.5,658.0 L778.7,685.9 L781.5,736.1 L778.7,775.1 L801.0,800.2" fill="none" stroke="#FFFFFF" stroke-width="1.8" stroke-opacity="0.45" stroke-linejoin="round"/><path d="M784.3,605.1 L781.5,658.0 L778.7,685.9 L781.5,736.1 L778.7,775.1 L801.0,800.2" fill="none" stroke="#AEB9C6" stroke-width="0.85" stroke-linejoin="round"/><path d="M784.3,605.1 L773.1,593.9 L739.7,580.0" fill="none" stroke="#FFFFFF" stroke-width="1.8" stroke-opacity="0.45" stroke-linejoin="round"/><path d="M784.3,605.1 L773.1,593.9 L739.7,580.0" fill="none" stroke="#AEB9C6" stroke-width="0.85" stroke-linejoin="round"/><path d="M784.3,605.1 L803.8,593.9 L837.2,580.0" fill="none" stroke="#FFFFFF" stroke-width="1.8" stroke-opacity="0.45" stroke-linejoin="round"/><path d="M784.3,605.1 L803.8,593.9 L837.2,580.0" fill="none" stroke="#AEB9C6" stroke-width="0.85" stroke-linejoin="round"/><path d="M717.4,669.2 L753.6,666.4 L775.9,685.9" fill="none" stroke="#FFFFFF" stroke-width="1.8" stroke-opacity="0.45" stroke-linejoin="round"/><path d="M717.4,669.2 L753.6,666.4 L775.9,685.9" fill="none" stroke="#AEB9C6" stroke-width="0.85" stroke-linejoin="round"/><path d="M781.5,691.5 L809.4,674.8 L831.6,649.7" fill="none" stroke="#FFFFFF" stroke-width="1.8" stroke-opacity="0.45" stroke-linejoin="round"/><path d="M781.5,691.5 L809.4,674.8 L831.6,649.7" fill="none" stroke="#AEB9C6" stroke-width="0.85" stroke-linejoin="round"/><path d="M781.5,697.1 L814.9,702.6" fill="none" stroke="#FFFFFF" stroke-width="1.8" stroke-opacity="0.45" stroke-linejoin="round"/><path d="M781.5,697.1 L814.9,702.6" fill="none" stroke="#AEB9C6" stroke-width="0.85" stroke-linejoin="round"/><path d="M814.9,702.6 L837.2,691.5 L865.1,697.1 L887.4,708.2" fill="none" stroke="#FFFFFF" stroke-width="1.8" stroke-opacity="0.45" stroke-linejoin="round"/><path d="M814.9,702.6 L837.2,691.5 L865.1,697.1 L887.4,708.2" fill="none" stroke="#AEB9C6" stroke-width="0.85" stroke-linejoin="round"/><path d="M887.4,708.2 L912.5,691.5 L943.1,685.9" fill="none" stroke="#FFFFFF" stroke-width="1.8" stroke-opacity="0.45" stroke-linejoin="round"/><path d="M887.4,708.2 L912.5,691.5 L943.1,685.9" fill="none" stroke="#AEB9C6" stroke-width="0.85" stroke-linejoin="round"/><path d="M887.4,708.2 L920.8,724.9 L934.8,741.6" fill="none" stroke="#FFFFFF" stroke-width="1.8" stroke-opacity="0.45" stroke-linejoin="round"/><path d="M887.4,708.2 L920.8,724.9 L934.8,741.6" fill="none" stroke="#AEB9C6" stroke-width="0.85" stroke-linejoin="round"/><path d="M943.1,685.9 L926.4,719.4 L934.8,741.6" fill="none" stroke="#FFFFFF" stroke-width="1.8" stroke-opacity="0.45" stroke-linejoin="round"/><path d="M943.1,685.9 L926.4,719.4 L934.8,741.6" fill="none" stroke="#AEB9C6" stroke-width="0.85" stroke-linejoin="round"/><path d="M943.1,685.9 L934.8,635.7 L920.8,593.9" fill="none" stroke="#FFFFFF" stroke-width="1.8" stroke-opacity="0.45" stroke-linejoin="round"/><path d="M943.1,685.9 L934.8,635.7 L920.8,593.9" fill="none" stroke="#AEB9C6" stroke-width="0.85" stroke-linejoin="round"/><path d="M943.1,685.9 L1001.7,688.7" fill="none" stroke="#FFFFFF" stroke-width="1.8" stroke-opacity="0.45" stroke-linejoin="round"/><path d="M943.1,685.9 L1001.7,688.7" fill="none" stroke="#AEB9C6" stroke-width="0.85" stroke-linejoin="round"/><path d="M870.7,780.7 L837.2,791.8 L803.8,800.2" fill="none" stroke="#FFFFFF" stroke-width="1.8" stroke-opacity="0.45" stroke-linejoin="round"/><path d="M870.7,780.7 L837.2,791.8 L803.8,800.2" fill="none" stroke="#AEB9C6" stroke-width="0.85" stroke-linejoin="round"/><path d="M670.0,691.5 L697.9,677.5 L717.4,669.2" fill="none" stroke="#FFFFFF" stroke-width="1.8" stroke-opacity="0.45" stroke-linejoin="round"/><path d="M670.0,691.5 L697.9,677.5 L717.4,669.2" fill="none" stroke="#AEB9C6" stroke-width="0.85" stroke-linejoin="round"/><path d="M831.6,649.7 L865.1,635.7 L881.8,607.9 L893.0,580.0" fill="none" stroke="#FFFFFF" stroke-width="1.8" stroke-opacity="0.45" stroke-linejoin="round"/><path d="M831.6,649.7 L865.1,635.7 L881.8,607.9 L893.0,580.0" fill="none" stroke="#AEB9C6" stroke-width="0.85" stroke-linejoin="round"/><path d="M1009.7,689.5 L1043.7,688.6 L1061.6,688.6" fill="none" stroke="#FFFFFF" stroke-width="1.8" stroke-opacity="0.45" stroke-linejoin="round"/><path d="M1009.7,689.5 L1043.7,688.6 L1061.6,688.6" fill="none" stroke="#AEB9C6" stroke-width="0.85" stroke-linejoin="round"/><path d="M1061.6,688.6 L1097.4,670.7 L1115.3,677.9" fill="none" stroke="#FFFFFF" stroke-width="1.8" stroke-opacity="0.45" stroke-linejoin="round"/><path d="M1061.6,688.6 L1097.4,670.7 L1115.3,677.9" fill="none" stroke="#AEB9C6" stroke-width="0.85" stroke-linejoin="round"/><path d="M990.0,722.7 L1024.0,738.8" fill="none" stroke="#FFFFFF" stroke-width="1.8" stroke-opacity="0.45" stroke-linejoin="round"/><path d="M990.0,722.7 L1024.0,738.8" fill="none" stroke="#AEB9C6" stroke-width="0.85" stroke-linejoin="round"/><path d="M1024.0,738.8 L1020.4,774.6" fill="none" stroke="#FFFFFF" stroke-width="1.8" stroke-opacity="0.45" stroke-linejoin="round"/><path d="M1024.0,738.8 L1020.4,774.6" fill="none" stroke="#AEB9C6" stroke-width="0.85" stroke-linejoin="round"/><path d="M1024.0,738.8 L1040.1,704.8 L1061.6,688.6" fill="none" stroke="#FFFFFF" stroke-width="1.8" stroke-opacity="0.45" stroke-linejoin="round"/><path d="M1024.0,738.8 L1040.1,704.8 L1061.6,688.6" fill="none" stroke="#AEB9C6" stroke-width="0.85" stroke-linejoin="round"/><path d="M1024.0,738.8 L1065.2,756.7 L1115.3,796.1" fill="none" stroke="#FFFFFF" stroke-width="1.8" stroke-opacity="0.45" stroke-linejoin="round"/><path d="M1024.0,738.8 L1065.2,756.7 L1115.3,796.1" fill="none" stroke="#AEB9C6" stroke-width="0.85" stroke-linejoin="round"/><path d="M1009.7,689.5 L1006.1,660.0" fill="none" stroke="#FFFFFF" stroke-width="1.8" stroke-opacity="0.45" stroke-linejoin="round"/><path d="M1009.7,689.5 L1006.1,660.0" fill="none" stroke="#AEB9C6" stroke-width="0.85" stroke-linejoin="round"/><path d="M1020.4,774.6 L993.6,776.4" fill="none" stroke="#FFFFFF" stroke-width="1.8" stroke-opacity="0.45" stroke-linejoin="round"/><path d="M1020.4,774.6 L993.6,776.4" fill="none" stroke="#AEB9C6" stroke-width="0.85" stroke-linejoin="round"/><path d="M1020.4,774.6 L1034.8,804.0" fill="none" stroke="#FFFFFF" stroke-width="1.8" stroke-opacity="0.45" stroke-linejoin="round"/><path d="M1020.4,774.6 L1034.8,804.0" fill="none" stroke="#AEB9C6" stroke-width="0.85" stroke-linejoin="round"/><path d="M1115.3,677.9 L1138.6,695.8" fill="none" stroke="#FFFFFF" stroke-width="1.8" stroke-opacity="0.45" stroke-linejoin="round"/><path d="M1115.3,677.9 L1138.6,695.8" fill="none" stroke="#AEB9C6" stroke-width="0.85" stroke-linejoin="round"/><path d="M1138.6,695.8 L1169.1,704.8 L1183.0,710.1" fill="none" stroke="#FFFFFF" stroke-width="1.8" stroke-opacity="0.45" stroke-linejoin="round"/><path d="M1138.6,695.8 L1169.1,704.8 L1183.0,710.1" fill="none" stroke="#AEB9C6" stroke-width="0.85" stroke-linejoin="round"/><path d="M1169.1,706.6 L1176.2,735.2 L1183.0,749.5" fill="none" stroke="#FFFFFF" stroke-width="1.8" stroke-opacity="0.45" stroke-linejoin="round"/><path d="M1169.1,706.6 L1176.2,735.2 L1183.0,749.5" fill="none" stroke="#AEB9C6" stroke-width="0.85" stroke-linejoin="round"/><path d="M848,224 L866,232 L870,240 L871,248 L866,280 L852,282 L852,288 L862,292 L864,305 L854,313 L856,321 L840,329 L823.3,330 L832,351 L832,357.4 L828.3,366 L829.6,369.8 L820.8,377.3 L827,387.2 L825.8,393.4 L829.2,394 L833.2,398 L839.1,410 L833.2,425.7 L821.2,429.7 L817.2,445.6 L819.2,463.5" fill="none" stroke="#DFA68A" stroke-width="1.15" stroke-linejoin="round"/><path d="M727.7,360 L740,366 L761,357.4 L765,352.4 L778.6,348.7 L789.8,351 L797.2,362.3 L809.7,367.3 L819.6,369.8 L820.8,377.3" fill="none" stroke="#DFA68A" stroke-width="1.15" stroke-linejoin="round"/><path d="M695.9,374 L697.9,388 L719.7,394 L723.7,406 L737.6,410 L739.6,418 L755.6,418 L757.5,437.6 L779.4,435.7 L781.4,427.7 L783.4,447.6 L805.3,465.5 L819.2,463.5 L829.2,467.5 L845.1,469.5 L861,485.4 L880.9,487.4 L900,497.3 L896,510 L893,520 L887,545 L884,570" fill="none" stroke="#DFA68A" stroke-width="1.15" stroke-linejoin="round"/><path d="M833,426 L839,450 L845,465.5" fill="none" stroke="#DFA68A" stroke-width="1.15" stroke-linejoin="round"/><path d="M884,572 L862,580 L858,588 L844,605 L840,621 L830,640 L838,650 L853,650 L860,665 L864,667 L882,663 L896,657 L904,645 L918,637 L928,652 L934,653 L946,649 L950,633 L964,639 L977,647 L977,633 L989,629 L1010,617 L1024,607 L1054,601 L1058,615 L1080,625 L1111,631 L1129,635 L1147,633 L1157,625 L1183,623" fill="none" stroke="#DFA68A" stroke-width="1.15" stroke-linejoin="round"/><path d="M884,570 L890,576 L916,572 L922,564 L930,570 L957,576 L962,582 L957,590 L955,601 L969,607 L989,613" fill="none" stroke="#DFA68A" stroke-width="1.15" stroke-linejoin="round"/><path d="M962,578 L970,576 L982,586 L990,574 L1010,582 L1030,578 L1054,572 L1056,566 L1074,570 L1086,578 L1088,566 L1078,546 L1076,542 L1101,520 L1115,510 L1121,518 L1139,516 L1149,514 L1159,493 L1183,497" fill="none" stroke="#DFA68A" stroke-width="1.15" stroke-linejoin="round"/><path d="M1115,510 L1093,481 L1078,475 L1064,452 L1066,442 L1052,420 L1058,426 L1084,412 L1101,400 L1133,386 L1135,378 L1143,382 L1153,388 L1159,370 L1159,350 L1149,330 L1149,313 L1143,301 L1143,284 L1127,268 L1127,262 L1138,240 L1131,202" fill="none" stroke="#DFA68A" stroke-width="1.15" stroke-linejoin="round"/><path d="M1159,378 L1167,380 L1173,392 L1183,388" fill="none" stroke="#DFA68A" stroke-width="1.15" stroke-linejoin="round"/><path d="M1111,631 L1101,645 L1105,661 L1107,670 L1115,678" fill="none" stroke="#DFA68A" stroke-width="1.15" stroke-linejoin="round"/><path d="M1106,687.7 L1124.9,684.7 L1141.7,678.8 L1147.7,682.7 L1169.6,688.7 L1173.6,683.7 L1169.6,674.8 L1181.5,666.8 L1190,665" fill="none" stroke="#DFA68A" stroke-width="1.15" stroke-linejoin="round"/><path d="M838,650 L848,663 L865,680 L870.7,691.5 L862.3,700 L851,711 L859.5,725 L865,747 L862.3,758.4 L881.8,764 L887.4,769.5 L881.8,778" fill="none" stroke="#DFA68A" stroke-width="1.15" stroke-linejoin="round"/><text x="977" y="223.7" font-size="10.3" font-weight="normal" fill="#fff" stroke="#fff" stroke-width="2.4" stroke-opacity="0.8" stroke-linejoin="round" opacity="0.9">Hamburg</text><text x="977" y="223.7" font-size="10.3" font-weight="normal" fill="#1f1f1f" stroke="#1f1f1f" stroke-width="0.6">Hamburg</text><circle cx="973" cy="224" r="2.1" fill="#fff" stroke="#2a2a2a" stroke-width="1.2"/><text x="934" y="254.1" font-size="9.8" font-weight="normal" fill="#fff" stroke="#fff" stroke-width="2.4" stroke-opacity="0.8" stroke-linejoin="round" opacity="0.9">Bremen</text><text x="934" y="254.1" font-size="9.8" font-weight="normal" fill="#1f1f1f" stroke="#1f1f1f" stroke-width="0.42">Bremen</text><circle cx="931.3" cy="253.8" r="2.1" fill="#2a2a2a" stroke="#fff" stroke-width="0.9"/><text x="1145.5" y="232.2" font-size="9.8" font-weight="normal" fill="#fff" stroke="#fff" stroke-width="2.4" stroke-opacity="0.8" stroke-linejoin="round" opacity="0.9">Szczecin</text><text x="1145.5" y="232.2" font-size="9.8" font-weight="normal" fill="#1f1f1f" stroke="#1f1f1f" stroke-width="0.42">Szczecin</text><circle cx="1142" cy="231" r="2.1" fill="#2a2a2a" stroke="#fff" stroke-width="0.9"/><text x="1104" y="287.0" font-size="12.5" font-weight="bold" fill="#fff" stroke="#fff" stroke-width="2.4" stroke-opacity="0.8" stroke-linejoin="round" opacity="0.9">Berlin</text><text x="1104" y="287.0" font-size="12.5" font-weight="bold" fill="#1f1f1f" stroke="#1f1f1f" stroke-width="0.2">Berlin</text><circle cx="1099.6" cy="287.7" r="2.1" fill="#fff" stroke="#2a2a2a" stroke-width="1.2"/><text x="967" y="297.1" font-size="9.5" font-weight="normal" fill="#fff" stroke="#fff" stroke-width="2.4" stroke-opacity="0.8" stroke-linejoin="round" opacity="0.9">Hannover</text><text x="967" y="297.1" font-size="9.5" font-weight="normal" fill="#1f1f1f" stroke="#1f1f1f" stroke-width="0.42">Hannover</text><circle cx="964" cy="297" r="2.1" fill="#2a2a2a" stroke="#fff" stroke-width="0.9"/><text x="725.8" y="296.7" font-size="10.3" font-weight="normal" fill="#fff" stroke="#fff" stroke-width="2.4" stroke-opacity="0.8" stroke-linejoin="round" opacity="0.9">Amsterdam</text><text x="725.8" y="296.7" font-size="10.3" font-weight="normal" fill="#1f1f1f" stroke="#1f1f1f" stroke-width="0.6">Amsterdam</text><circle cx="784.5" cy="297" r="2.1" fill="#fff" stroke="#2a2a2a" stroke-width="1.2"/><text x="720.7" y="323.8" font-size="9.5" font-weight="normal" fill="#fff" stroke="#fff" stroke-width="2.4" stroke-opacity="0.8" stroke-linejoin="round" opacity="0.9">Rotterdam</text><text x="720.7" y="323.8" font-size="9.5" font-weight="normal" fill="#1f1f1f" stroke="#1f1f1f" stroke-width="0.42">Rotterdam</text><circle cx="768" cy="324" r="2.1" fill="#fff" stroke="#2a2a2a" stroke-width="1.2"/><text x="883.4" y="348.5" font-size="9.8" font-weight="normal" fill="#fff" stroke="#fff" stroke-width="2.4" stroke-opacity="0.8" stroke-linejoin="round" opacity="0.9">Dortmund</text><text x="883.4" y="348.5" font-size="9.8" font-weight="normal" fill="#1f1f1f" stroke="#1f1f1f" stroke-width="0.42">Dortmund</text><circle cx="880" cy="349" r="2.1" fill="#2a2a2a" stroke="#fff" stroke-width="0.9"/><text x="856.7" y="365.8" font-size="9.8" font-weight="normal" fill="#fff" stroke="#fff" stroke-width="2.4" stroke-opacity="0.8" stroke-linejoin="round" opacity="0.9">Düsseldorf</text><text x="856.7" y="365.8" font-size="9.8" font-weight="normal" fill="#1f1f1f" stroke="#1f1f1f" stroke-width="0.42">Düsseldorf</text><circle cx="853.5" cy="365.5" r="2.1" fill="#2a2a2a" stroke="#fff" stroke-width="0.9"/><text x="863.5" y="382.0" font-size="10.3" font-weight="normal" fill="#fff" stroke="#fff" stroke-width="2.4" stroke-opacity="0.8" stroke-linejoin="round" opacity="0.9">Cologne</text><text x="863.5" y="382.0" font-size="10.3" font-weight="normal" fill="#1f1f1f" stroke="#1f1f1f" stroke-width="0.6">Cologne</text><circle cx="859.5" cy="383" r="2.1" fill="#fff" stroke="#2a2a2a" stroke-width="1.2"/><text x="1065.7" y="359.0" font-size="9.8" font-weight="normal" fill="#fff" stroke="#fff" stroke-width="2.4" stroke-opacity="0.8" stroke-linejoin="round" opacity="0.9">Leipzig</text><text x="1065.7" y="359.0" font-size="9.8" font-weight="normal" fill="#1f1f1f" stroke="#1f1f1f" stroke-width="0.42">Leipzig</text><circle cx="1062" cy="359" r="2.1" fill="#fff" stroke="#2a2a2a" stroke-width="1.2"/><text x="1116" y="376.2" font-size="9.8" font-weight="normal" fill="#fff" stroke="#fff" stroke-width="2.4" stroke-opacity="0.8" stroke-linejoin="round" opacity="0.9">Dresden</text><text x="1116" y="376.2" font-size="9.8" font-weight="normal" fill="#1f1f1f" stroke="#1f1f1f" stroke-width="0.42">Dresden</text><circle cx="1112" cy="376.3" r="2.1" fill="#2a2a2a" stroke="#fff" stroke-width="0.9"/><text x="767.7" y="387.1" font-size="12.3" font-weight="bold" fill="#fff" stroke="#fff" stroke-width="2.4" stroke-opacity="0.8" stroke-linejoin="round" opacity="0.9">Brussels</text><text x="767.7" y="387.1" font-size="12.3" font-weight="bold" fill="#1f1f1f" stroke="#1f1f1f" stroke-width="0.2">Brussels</text><circle cx="763.3" cy="388.2" r="2.1" fill="#fff" stroke="#2a2a2a" stroke-width="1.2"/><text x="696" y="407.2" font-size="9.5" font-weight="normal" fill="#fff" stroke="#fff" stroke-width="2.4" stroke-opacity="0.8" stroke-linejoin="round" opacity="0.9">Lille</text><text x="696" y="407.2" font-size="9.5" font-weight="normal" fill="#1f1f1f" stroke="#1f1f1f" stroke-width="0.42">Lille</text><circle cx="715.9" cy="401" r="2.1" fill="#fff" stroke="#2a2a2a" stroke-width="1.2"/><text x="927.3" y="430.5" font-size="9.8" font-weight="normal" fill="#fff" stroke="#fff" stroke-width="2.4" stroke-opacity="0.8" stroke-linejoin="round" opacity="0.9">Frankfurt</text><text x="927.3" y="430.5" font-size="9.8" font-weight="normal" fill="#1f1f1f" stroke="#1f1f1f" stroke-width="0.42">Frankfurt</text><circle cx="923.7" cy="430.5" r="2.1" fill="#2a2a2a" stroke="#fff" stroke-width="0.9"/><text x="1100" y="431.7" font-size="10.3" font-weight="normal" fill="#fff" stroke="#fff" stroke-width="2.4" stroke-opacity="0.8" stroke-linejoin="round" opacity="0.9">Prague</text><text x="1100" y="431.7" font-size="10.3" font-weight="normal" fill="#1f1f1f" stroke="#1f1f1f" stroke-width="0.6">Prague</text><circle cx="1137.5" cy="432" r="2.1" fill="#fff" stroke="#2a2a2a" stroke-width="1.2"/><text x="833" y="460.0" font-size="9.6" font-weight="normal" fill="#fff" stroke="#fff" stroke-width="2.4" stroke-opacity="0.8" stroke-linejoin="round" opacity="0.9">Luxembourg</text><text x="833" y="460.0" font-size="9.6" font-weight="normal" fill="#1f1f1f" stroke="#1f1f1f" stroke-width="0.42">Luxembourg</text><circle cx="830" cy="460" r="2.1" fill="#2a2a2a" stroke="#fff" stroke-width="0.9"/><text x="1017" y="468.3" font-size="9.6" font-weight="normal" fill="#fff" stroke="#fff" stroke-width="2.4" stroke-opacity="0.8" stroke-linejoin="round" opacity="0.9">Nuremberg</text><text x="1017" y="468.3" font-size="9.6" font-weight="normal" fill="#1f1f1f" stroke="#1f1f1f" stroke-width="0.42">Nuremberg</text><circle cx="1013.8" cy="468.4" r="2.1" fill="#2a2a2a" stroke="#fff" stroke-width="0.9"/><text x="755.4" y="479.9" font-size="9.6" font-weight="normal" fill="#fff" stroke="#fff" stroke-width="2.4" stroke-opacity="0.8" stroke-linejoin="round" opacity="0.9">Reims</text><text x="755.4" y="479.9" font-size="9.6" font-weight="normal" fill="#1f1f1f" stroke="#1f1f1f" stroke-width="0.42">Reims</text><circle cx="752.2" cy="480" r="2.1" fill="#fff" stroke="#2a2a2a" stroke-width="1.2"/><text x="834.7" y="487.5" font-size="9.8" font-weight="normal" fill="#fff" stroke="#fff" stroke-width="2.4" stroke-opacity="0.8" stroke-linejoin="round" opacity="0.9">Metz</text><text x="834.7" y="487.5" font-size="9.8" font-weight="normal" fill="#1f1f1f" stroke="#1f1f1f" stroke-width="0.42">Metz</text><circle cx="831" cy="487.6" r="2.1" fill="#2a2a2a" stroke="#fff" stroke-width="0.9"/><text x="670" y="511.3" font-size="12" font-weight="normal" fill="#fff" stroke="#fff" stroke-width="2.4" stroke-opacity="0.8" stroke-linejoin="round" opacity="0.9">ris</text><text x="670" y="511.3" font-size="12" font-weight="normal" fill="#1f1f1f" stroke="#1f1f1f" stroke-width="0.6">ris</text><circle cx="689" cy="503" r="2.1" fill="#fff" stroke="#2a2a2a" stroke-width="1.2"/><text x="839.5" y="525.5" font-size="9.6" font-weight="normal" fill="#fff" stroke="#fff" stroke-width="2.4" stroke-opacity="0.8" stroke-linejoin="round" opacity="0.9">Strasbourg</text><text x="839.5" y="525.5" font-size="9.6" font-weight="normal" fill="#1f1f1f" stroke="#1f1f1f" stroke-width="0.42">Strasbourg</text><circle cx="890" cy="519" r="2.1" fill="#2a2a2a" stroke="#fff" stroke-width="0.9"/><text x="1035.8" y="542.6" font-size="10.8" font-weight="normal" fill="#fff" stroke="#fff" stroke-width="2.4" stroke-opacity="0.8" stroke-linejoin="round" opacity="0.9">Munich</text><text x="1035.8" y="542.6" font-size="10.8" font-weight="normal" fill="#1f1f1f" stroke="#1f1f1f" stroke-width="0.6">Munich</text><circle cx="1031.4" cy="542.3" r="2.1" fill="#fff" stroke="#2a2a2a" stroke-width="1.2"/><text x="1090.4" y="561.3" font-size="9.8" font-weight="normal" fill="#fff" stroke="#fff" stroke-width="2.4" stroke-opacity="0.8" stroke-linejoin="round" opacity="0.9">Salzburg</text><text x="1090.4" y="561.3" font-size="9.8" font-weight="normal" fill="#1f1f1f" stroke="#1f1f1f" stroke-width="0.42">Salzburg</text><circle cx="1086.4" cy="561.4" r="2.1" fill="#2a2a2a" stroke="#fff" stroke-width="0.9"/><text x="1173.4" y="538.3" font-size="12" font-weight="normal" fill="#fff" stroke="#fff" stroke-width="2.4" stroke-opacity="0.8" stroke-linejoin="round" opacity="0.9">Vi</text><text x="1173.4" y="538.3" font-size="12" font-weight="normal" fill="#1f1f1f" stroke="#1f1f1f" stroke-width="0.6">Vi</text><text x="889" y="585.3" font-size="10" font-weight="normal" fill="#fff" stroke="#fff" stroke-width="2.4" stroke-opacity="0.8" stroke-linejoin="round" opacity="0.9">Zurich</text><text x="889" y="585.3" font-size="10" font-weight="normal" fill="#1f1f1f" stroke="#1f1f1f" stroke-width="0.42">Zurich</text><circle cx="919.3" cy="585.3" r="2.1" fill="#fff" stroke="#2a2a2a" stroke-width="1.2"/><text x="959.2" y="598.2" font-size="9.3" font-weight="normal" fill="#fff" stroke="#fff" stroke-width="2.4" stroke-opacity="0.8" stroke-linejoin="round" opacity="0.9">Vaduz</text><text x="959.2" y="598.2" font-size="9.3" font-weight="normal" fill="#1f1f1f" stroke="#1f1f1f" stroke-width="0.42">Vaduz</text><circle cx="955.6" cy="598" r="2.1" fill="#2a2a2a" stroke="#fff" stroke-width="0.9"/><text x="764.5" y="594.8" font-size="9.8" font-weight="normal" fill="#fff" stroke="#fff" stroke-width="2.4" stroke-opacity="0.8" stroke-linejoin="round" opacity="0.9">Dijon</text><text x="764.5" y="594.8" font-size="9.8" font-weight="normal" fill="#1f1f1f" stroke="#1f1f1f" stroke-width="0.42">Dijon</text><circle cx="789.3" cy="588.5" r="2.1" fill="#fff" stroke="#2a2a2a" stroke-width="1.2"/><text x="882.2" y="608.5" font-size="10" font-weight="normal" fill="#fff" stroke="#fff" stroke-width="2.4" stroke-opacity="0.8" stroke-linejoin="round" opacity="0.9">Bern</text><text x="882.2" y="608.5" font-size="10" font-weight="normal" fill="#1f1f1f" stroke="#1f1f1f" stroke-width="0.42">Bern</text><circle cx="878.6" cy="608.5" r="2.1" fill="#2a2a2a" stroke="#fff" stroke-width="0.9"/><text x="834.3" y="657.5" font-size="9.8" font-weight="normal" fill="#fff" stroke="#fff" stroke-width="2.4" stroke-opacity="0.8" stroke-linejoin="round" opacity="0.9">Geneva</text><text x="834.3" y="657.5" font-size="9.8" font-weight="normal" fill="#1f1f1f" stroke="#1f1f1f" stroke-width="0.42">Geneva</text><circle cx="830.7" cy="649.6" r="2.1" fill="#2a2a2a" stroke="#fff" stroke-width="0.9"/><text x="670" y="671.4" font-size="9.8" font-weight="normal" fill="#fff" stroke="#fff" stroke-width="2.4" stroke-opacity="0.8" stroke-linejoin="round" opacity="0.9">nt-Ferrand</text><text x="670" y="671.4" font-size="9.8" font-weight="normal" fill="#1f1f1f" stroke="#1f1f1f" stroke-width="0.42">nt-Ferrand</text><circle cx="717" cy="671.5" r="2.1" fill="#2a2a2a" stroke="#fff" stroke-width="0.9"/><text x="947.2" y="688.0" font-size="11.5" font-weight="normal" fill="#fff" stroke="#fff" stroke-width="2.4" stroke-opacity="0.8" stroke-linejoin="round" opacity="0.9">Milan</text><text x="947.2" y="688.0" font-size="11.5" font-weight="normal" fill="#1f1f1f" stroke="#1f1f1f" stroke-width="0.6">Milan</text><circle cx="943.2" cy="688.2" r="2.1" fill="#fff" stroke="#2a2a2a" stroke-width="1.2"/><text x="1013.8" y="689.4" font-size="9.8" font-weight="normal" fill="#fff" stroke="#fff" stroke-width="2.4" stroke-opacity="0.8" stroke-linejoin="round" opacity="0.9">Verona</text><text x="1013.8" y="689.4" font-size="9.8" font-weight="normal" fill="#1f1f1f" stroke="#1f1f1f" stroke-width="0.42">Verona</text><circle cx="1010.2" cy="689.4" r="2.1" fill="#2a2a2a" stroke="#fff" stroke-width="0.9"/><text x="1064.1" y="689.4" font-size="9.8" font-weight="normal" fill="#fff" stroke="#fff" stroke-width="2.4" stroke-opacity="0.8" stroke-linejoin="round" opacity="0.9">Venice</text><text x="1064.1" y="689.4" font-size="9.8" font-weight="normal" fill="#1f1f1f" stroke="#1f1f1f" stroke-width="0.42">Venice</text><circle cx="1060" cy="689.4" r="2.1" fill="#fff" stroke="#2a2a2a" stroke-width="1.2"/><text x="1117.5" y="678.2" font-size="9.8" font-weight="normal" fill="#fff" stroke="#fff" stroke-width="2.4" stroke-opacity="0.8" stroke-linejoin="round" opacity="0.9">Trieste</text><text x="1117.5" y="678.2" font-size="9.8" font-weight="normal" fill="#1f1f1f" stroke="#1f1f1f" stroke-width="0.42">Trieste</text><circle cx="1113.5" cy="678.7" r="2.1" fill="#2a2a2a" stroke="#fff" stroke-width="0.9"/><text x="1141.9" y="695.3" font-size="9.8" font-weight="normal" fill="#fff" stroke="#fff" stroke-width="2.4" stroke-opacity="0.8" stroke-linejoin="round" opacity="0.9">Rijeka</text><text x="1141.9" y="695.3" font-size="9.8" font-weight="normal" fill="#1f1f1f" stroke="#1f1f1f" stroke-width="0.42">Rijeka</text><circle cx="1138.3" cy="695.8" r="2.1" fill="#2a2a2a" stroke="#fff" stroke-width="0.9"/><text x="818.8" y="710.9" font-size="9.8" font-weight="normal" fill="#fff" stroke="#fff" stroke-width="2.4" stroke-opacity="0.8" stroke-linejoin="round" opacity="0.9">Grenoble</text><text x="818.8" y="710.9" font-size="9.8" font-weight="normal" fill="#1f1f1f" stroke="#1f1f1f" stroke-width="0.42">Grenoble</text><circle cx="815.2" cy="703.4" r="2.1" fill="#fff" stroke="#2a2a2a" stroke-width="1.2"/><text x="892.2" y="708.7" font-size="11.3" font-weight="normal" fill="#fff" stroke="#fff" stroke-width="2.4" stroke-opacity="0.8" stroke-linejoin="round" opacity="0.9">Turin</text><text x="892.2" y="708.7" font-size="11.3" font-weight="normal" fill="#1f1f1f" stroke="#1f1f1f" stroke-width="0.6">Turin</text><circle cx="887.4" cy="709" r="2.1" fill="#fff" stroke="#2a2a2a" stroke-width="1.2"/><text x="937.3" y="743.2" font-size="9.8" font-weight="normal" fill="#fff" stroke="#fff" stroke-width="2.4" stroke-opacity="0.8" stroke-linejoin="round" opacity="0.9">Genoa</text><text x="937.3" y="743.2" font-size="9.8" font-weight="normal" fill="#1f1f1f" stroke="#1f1f1f" stroke-width="0.42">Genoa</text><circle cx="933.3" cy="743.3" r="2.1" fill="#2a2a2a" stroke="#fff" stroke-width="0.9"/><text x="1026.6" y="739.2" font-size="9.8" font-weight="normal" fill="#fff" stroke="#fff" stroke-width="2.4" stroke-opacity="0.8" stroke-linejoin="round" opacity="0.9">Bologna</text><text x="1026.6" y="739.2" font-size="9.8" font-weight="normal" fill="#1f1f1f" stroke="#1f1f1f" stroke-width="0.42">Bologna</text><circle cx="1023" cy="739.3" r="2.1" fill="#fff" stroke="#2a2a2a" stroke-width="1.2"/><text x="875.4" y="788.9" font-size="10.3" font-weight="normal" fill="#fff" stroke="#fff" stroke-width="2.4" stroke-opacity="0.8" stroke-linejoin="round" opacity="0.9">Nice</text><text x="875.4" y="788.9" font-size="10.3" font-weight="normal" fill="#1f1f1f" stroke="#1f1f1f" stroke-width="0.42">Nice</text><circle cx="871.8" cy="781.2" r="2.1" fill="#2a2a2a" stroke="#fff" stroke-width="0.9"/><text x="991.9" y="779.2" font-size="10" font-weight="normal" fill="#fff" stroke="#fff" stroke-width="2.4" stroke-opacity="0.8" stroke-linejoin="round" opacity="0.9">Pisa</text><text x="991.9" y="779.2" font-size="10" font-weight="normal" fill="#1f1f1f" stroke="#1f1f1f" stroke-width="0.42">Pisa</text><circle cx="988.3" cy="779.2" r="2.1" fill="#fff" stroke="#2a2a2a" stroke-width="1.2"/><text x="1023.8" y="775.9" font-size="9.8" font-weight="normal" fill="#fff" stroke="#fff" stroke-width="2.4" stroke-opacity="0.8" stroke-linejoin="round" opacity="0.9">Florence</text><text x="1023.8" y="775.9" font-size="9.8" font-weight="normal" fill="#1f1f1f" stroke="#1f1f1f" stroke-width="0.42">Florence</text><circle cx="1020.2" cy="775.6" r="2.1" fill="#fff" stroke="#2a2a2a" stroke-width="1.2"/><text x="801.6" y="809.7" font-size="10.3" font-weight="normal" fill="#fff" stroke="#fff" stroke-width="2.4" stroke-opacity="0.8" stroke-linejoin="round" opacity="0.9">Marseille</text><text x="801.6" y="809.7" font-size="10.3" font-weight="normal" fill="#1f1f1f" stroke="#1f1f1f" stroke-width="0.6">Marseille</text><text x="1176.6" y="602.1" font-size="10" font-weight="normal" fill="#fff" stroke="#fff" stroke-width="2.4" stroke-opacity="0.8" stroke-linejoin="round" opacity="0.9">G</text><text x="1176.6" y="602.1" font-size="10" font-weight="normal" fill="#1f1f1f" stroke="#1f1f1f" stroke-width="0.42">G</text><circle cx="1172.6" cy="602" r="2.1" fill="#2a2a2a" stroke="#fff" stroke-width="0.9"/><text x="782.5" y="278.7" font-size="9.3" font-weight="bold" letter-spacing="0.55" fill="#C4606B" stroke="#C4606B" stroke-width="0.45">NETHERLANDS</text><text x="961.2" y="377.2" font-size="9.3" font-weight="bold" letter-spacing="0.7" fill="#C4606B" stroke="#C4606B" stroke-width="0.45">GERMANY</text><text x="748.6" y="405.1" font-size="9.3" font-weight="bold" letter-spacing="0.6" fill="#C4606B" stroke="#C4606B" stroke-width="0.45">BELGIUM</text><text x="1149.5" y="456.2" font-size="9.3" font-weight="bold" letter-spacing="0.7" fill="#C4606B" stroke="#C4606B" stroke-width="0.45">CZECH</text><text x="1132" y="574.3" font-size="9.3" font-weight="bold" letter-spacing="0.7" fill="#C4606B" stroke="#C4606B" stroke-width="0.45">AUSTRIA</text><text x="677.2" y="628.5" font-size="9.3" font-weight="bold" letter-spacing="0.8" fill="#C4606B" stroke="#C4606B" stroke-width="0.45">FRANCE</text><text x="878.2" y="624.9" font-size="9.3" font-weight="bold" letter-spacing="0.55" fill="#C4606B" stroke="#C4606B" stroke-width="0.45">SWITZERLAND</text><text x="1121.1" y="663.6" font-size="9.3" font-weight="bold" letter-spacing="0.6" fill="#C4606B" stroke="#C4606B" stroke-width="0.45">SLOVENIA</text><text x="1177" y="696.3" font-size="9.3" font-weight="bold" letter-spacing="0.6" fill="#C4606B" stroke="#C4606B" stroke-width="0.45">CROATIA</text><path d="M857,666.5 L859.5,671 L854.5,671 Z" fill="#C7636D"/><text x="861.9" y="672.5" font-size="9.5" fill="#6b4a3a" stroke="#fff" stroke-width="2" stroke-opacity="0.6" paint-order="stroke">Mont Blanc</text><path d="M1073.7,599.5 L1076.2,604 L1071.2,604 Z" fill="#C7636D"/><text x="1078" y="605.4" font-size="9.5" fill="#6b4a3a" stroke="#fff" stroke-width="2" stroke-opacity="0.6" paint-order="stroke">Großglockner</text><g font-size="10" fill="#2F4A55" stroke="#2F4A55" stroke-width="0.35"><text x="681.5" y="208.5">0</text><text x="726.5" y="208.5">100</text><text x="776.5" y="208.5">200</text><text x="826.5" y="208.5">300 km</text></g><rect x="686" y="215.5" width="150" height="6" rx="3" fill="#5B7A80"/><rect x="735.5" y="216.5" width="50" height="4" fill="#AEE0F0"/><circle cx="942.5" cy="479" r="11.3" fill="#F27A1E"/><path d="M936.5,487.5 L948.5,487.5 L942.5,494 Z" fill="#F27A1E"/><rect x="941.75" y="475" width="1.5" height="10.5" rx="0.7" fill="#fff"/><circle cx="942.5" cy="474.5" r="2.6" fill="#fff"/><circle cx="942.1" cy="474" r="0.7" fill="#F27A1E"/><text x="942.5" y="504" text-anchor="middle" font-size="9.6" fill="#fff" stroke="#fff" stroke-width="2.4" stroke-opacity="0.85" stroke-linejoin="round">IMG_9181.JPG</text><text x="942.5" y="504" text-anchor="middle" font-size="9.6" fill="#1f1f1f" stroke="#1f1f1f" stroke-width="0.4">IMG_9181.JPG</text><circle cx="787.2" cy="660" r="11.3" fill="#7B7A7E"/><path d="M781.2,668.5 L793.2,668.5 L787.2,675 Z" fill="#7B7A7E"/><rect x="786.45" y="656" width="1.5" height="10.5" rx="0.7" fill="#fff"/><circle cx="787.2" cy="655.5" r="2.6" fill="#fff"/><circle cx="786.8000000000001" cy="655" r="0.7" fill="#7B7A7E"/><text x="787.2" y="685" text-anchor="middle" font-size="9.6" fill="#fff" stroke="#fff" stroke-width="2.4" stroke-opacity="0.85" stroke-linejoin="round">_AR33950_CONV.jpg</text><text x="787.2" y="685" text-anchor="middle" font-size="9.6" fill="#1f1f1f" stroke="#1f1f1f" stroke-width="0.4">_AR33950_CONV.jpg</text><circle cx="752.6" cy="755.2" r="11.3" fill="#7B7A7E"/><path d="M746.6,763.7 L758.6,763.7 L752.6,770.2 Z" fill="#7B7A7E"/><rect x="751.85" y="751.2" width="1.5" height="10.5" rx="0.7" fill="#fff"/><circle cx="752.6" cy="750.7" r="2.6" fill="#fff"/><circle cx="752.2" cy="750.2" r="0.7" fill="#7B7A7E"/><text x="752.6" y="780.2" text-anchor="middle" font-size="9.6" fill="#fff" stroke="#fff" stroke-width="2.4" stroke-opacity="0.85" stroke-linejoin="round">G0041267.dng</text><text x="752.6" y="780.2" text-anchor="middle" font-size="9.6" fill="#1f1f1f" stroke="#1f1f1f" stroke-width="0.4">G0041267.dng</text><circle cx="1155" cy="798" r="19.5" fill="#EEF0F5" fill-opacity="0.95"/><path d="M1162.0,785.9 L1163.5,783.3" stroke="#C9CBD2" stroke-width="1"/><path d="M1167.1,791.0 L1169.7,789.5" stroke="#C9CBD2" stroke-width="1"/><path d="M1167.1,805.0 L1169.7,806.5" stroke="#C9CBD2" stroke-width="1"/><path d="M1162.0,810.1 L1163.5,812.7" stroke="#C9CBD2" stroke-width="1"/><path d="M1148.0,810.1 L1146.5,812.7" stroke="#C9CBD2" stroke-width="1"/><path d="M1142.9,805.0 L1140.3,806.5" stroke="#C9CBD2" stroke-width="1"/><path d="M1142.9,791.0 L1140.3,789.5" stroke="#C9CBD2" stroke-width="1"/><path d="M1148.0,785.9 L1146.5,783.3" stroke="#C9CBD2" stroke-width="1"/><path d="M1155,781.3 L1157.8,786 L1152.2,786 Z" fill="#D9343F"/><text x="1155" y="803.8" text-anchor="middle" font-size="13" fill="#47474D" stroke="#47474D" stroke-width="0.5">N</text><path d="M1138.5,798.3 H1142 M1168,798.3 H1171.5" stroke="#44444A" stroke-width="1.6"/></svg></div>
</div>
</body></html>
